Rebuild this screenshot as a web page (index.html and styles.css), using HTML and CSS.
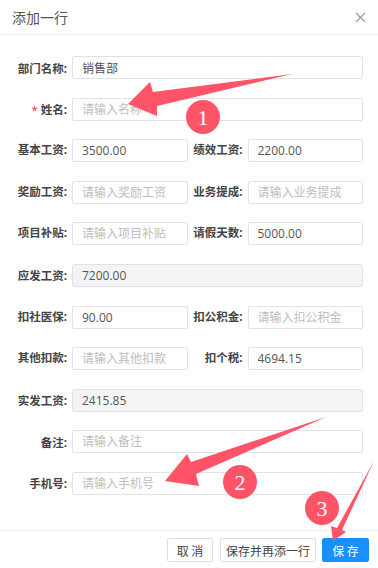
FILE: index.html
```html
<!DOCTYPE html>
<html lang="zh-CN">
<head>
    <meta charset="UTF-8">
    <meta name="viewport" content="width=device-width, initial-scale=1.0">
    <title>添加一行</title>
    <link rel="stylesheet" href="styles.css">
</head>
<body>

    <div class="dialog">
        <!-- HEADER -->
        <div class="dialog-header">
            <span class="dialog-title">添加一行</span>
            <svg class="close" width="11" height="11" viewBox="0 0 11 11">
                <path d="M1 1 L10 10 M10 1 L1 10" stroke="#999" stroke-width="1.1" fill="none"/>
            </svg>
        </div>

        <!-- FORM -->
        <div class="dialog-body">
            <div class="row">
                <label class="label">部门名称:</label>
                <input class="field" type="text" value="销售部">
            </div>
            <div class="row">
                <label class="label"><span class="star">*</span> 姓名:</label>
                <input class="field" type="text" placeholder="请输入名称">
            </div>
            <div class="row row-2">
                <label class="label">基本工资:</label>
                <input class="field" type="text" value="3500.00">
                <label class="label">绩效工资:</label>
                <input class="field" type="text" value="2200.00">
            </div>
            <div class="row row-2">
                <label class="label">奖励工资:</label>
                <input class="field" type="text" placeholder="请输入奖励工资">
                <label class="label">业务提成:</label>
                <input class="field" type="text" placeholder="请输入业务提成">
            </div>
            <div class="row row-2">
                <label class="label">项目补贴:</label>
                <input class="field" type="text" placeholder="请输入项目补贴">
                <label class="label">请假天数:</label>
                <input class="field" type="text" value="5000.00">
            </div>
            <div class="row">
                <label class="label">应发工资:</label>
                <input class="field" type="text" value="7200.00" disabled>
            </div>
            <div class="row row-2">
                <label class="label">扣社医保:</label>
                <input class="field" type="text" value="90.00">
                <label class="label">扣公积金:</label>
                <input class="field" type="text" placeholder="请输入扣公积金">
            </div>
            <div class="row row-2">
                <label class="label">其他扣款:</label>
                <input class="field" type="text" placeholder="请输入其他扣款">
                <label class="label">扣个税:</label>
                <input class="field" type="text" value="4694.15">
            </div>
            <div class="row">
                <label class="label">实发工资:</label>
                <input class="field" type="text" value="2415.85" disabled>
            </div>
            <div class="row">
                <label class="label">备注:</label>
                <input class="field" type="text" placeholder="请输入备注">
            </div>
            <div class="row">
                <label class="label">手机号:</label>
                <input class="field" type="text" placeholder="请输入手机号">
            </div>
        </div>

        <!-- FOOTER -->
        <div class="dialog-footer">
            <button class="btn btn-cancel">取 消</button>
            <button class="btn btn-again">保存并再添一行</button>
            <button class="btn btn-primary">保 存</button>
        </div>
    </div>

    <!-- annotation arrows drawn over the dialog -->
    <svg class="marks" width="378" height="568" viewBox="0 0 378 568">
        <g fill="#ff5468">
            <polygon points="292,74 153,92 150,82 128,104 157,116 157,106"/>
            <polygon points="326,417 196,474 199,486 165,481 187,454 191,462"/>
            <polygon points="374,461 342,530 346,532 333,541 331,526 337,528"/>
            <circle cx="203" cy="117" r="17"/>
            <circle cx="240" cy="482" r="17"/>
            <circle cx="322" cy="508" r="17"/>
        </g>
        <g class="mark-num" fill="#fff">
            <text x="203" y="125" text-anchor="middle">1</text>
            <text x="240" y="490" text-anchor="middle">2</text>
            <text x="322" y="516" text-anchor="middle">3</text>
        </g>
    </svg>

</body>
</html>
```

FILE: styles.css
```css
* { margin: 0; padding: 0; box-sizing: border-box; }

body {
    background: #fff;
    color: #333;
    font-family: "Open Sans", "Noto Sans CJK SC", sans-serif;
    font-size: 12px;
    width: 378px;
    height: 568px;
    overflow: hidden;
    position: relative;
}

.dialog {
    display: flex;
    flex-direction: column;
    height: 568px;
}

.dialog-header {
    height: 35px;
    padding: 0 12px;
    display: flex;
    align-items: center;
    justify-content: space-between;
    border-bottom: 1px solid #eeeeee;
}

.dialog-title {
    font-size: 14px;
    color: #555;
}

.dialog-body {
    padding: 21px 15px 0 0;
    display: flex;
    flex-direction: column;
    gap: 18.6px;
    height: 495px;
}

.row {
    display: grid;
    grid-template-columns: 72px 1fr;
    align-items: center;
    height: 23px;
}

.row-2 {
    grid-template-columns: 72px 1fr 60px 1fr;
    align-items: start;
}

.row-2 .label {
    padding-top: 2px;
}

.label {
    text-align: right;
    padding-right: 5px;
    font-size: 11.5px;
    font-weight: bold;
    color: #444;
    white-space: nowrap;
}

.star {
    color: #f5222d;
    font-weight: normal;
}

.field {
    height: 23px;
    width: 100%;
    border: 1px solid #dfe3e8;
    border-radius: 2px;
    padding: 0 9px;
    font-family: "Open Sans", "Noto Sans CJK SC", sans-serif;
    font-size: 12px;
    color: #555;
    background: #fff;
    outline: none;
}

.field::placeholder {
    color: #bdbdbd;
}

.field:disabled {
    background: #f4f4f4;
    color: #555;
}

.dialog-footer {
    border-top: 1px solid #eeeeee;
    display: flex;
    justify-content: flex-end;
    align-items: flex-start;
    gap: 6px;
    padding: 7px 9px 0 0;
    flex: 1;
}

.btn {
    height: 24px;
    padding: 0;
    border: 1px solid #dcdfe6;
    border-radius: 2px;
    background: #fff;
    color: #444;
    font-family: "Noto Sans CJK SC", sans-serif;
    font-size: 12px;
    white-space: nowrap;
}

.btn-cancel { width: 46px; margin-right: 1px; }
.btn-again { width: 96px; }

.btn-primary {
    background: #1890ff;
    border-color: #1890ff;
    color: #fff;
    width: 47px;
}

.marks {
    position: absolute;
    left: 0;
    top: 0;
    pointer-events: none;
}

.mark-num text {
    font-family: "Liberation Serif", serif;
    font-size: 22px;
}
```
